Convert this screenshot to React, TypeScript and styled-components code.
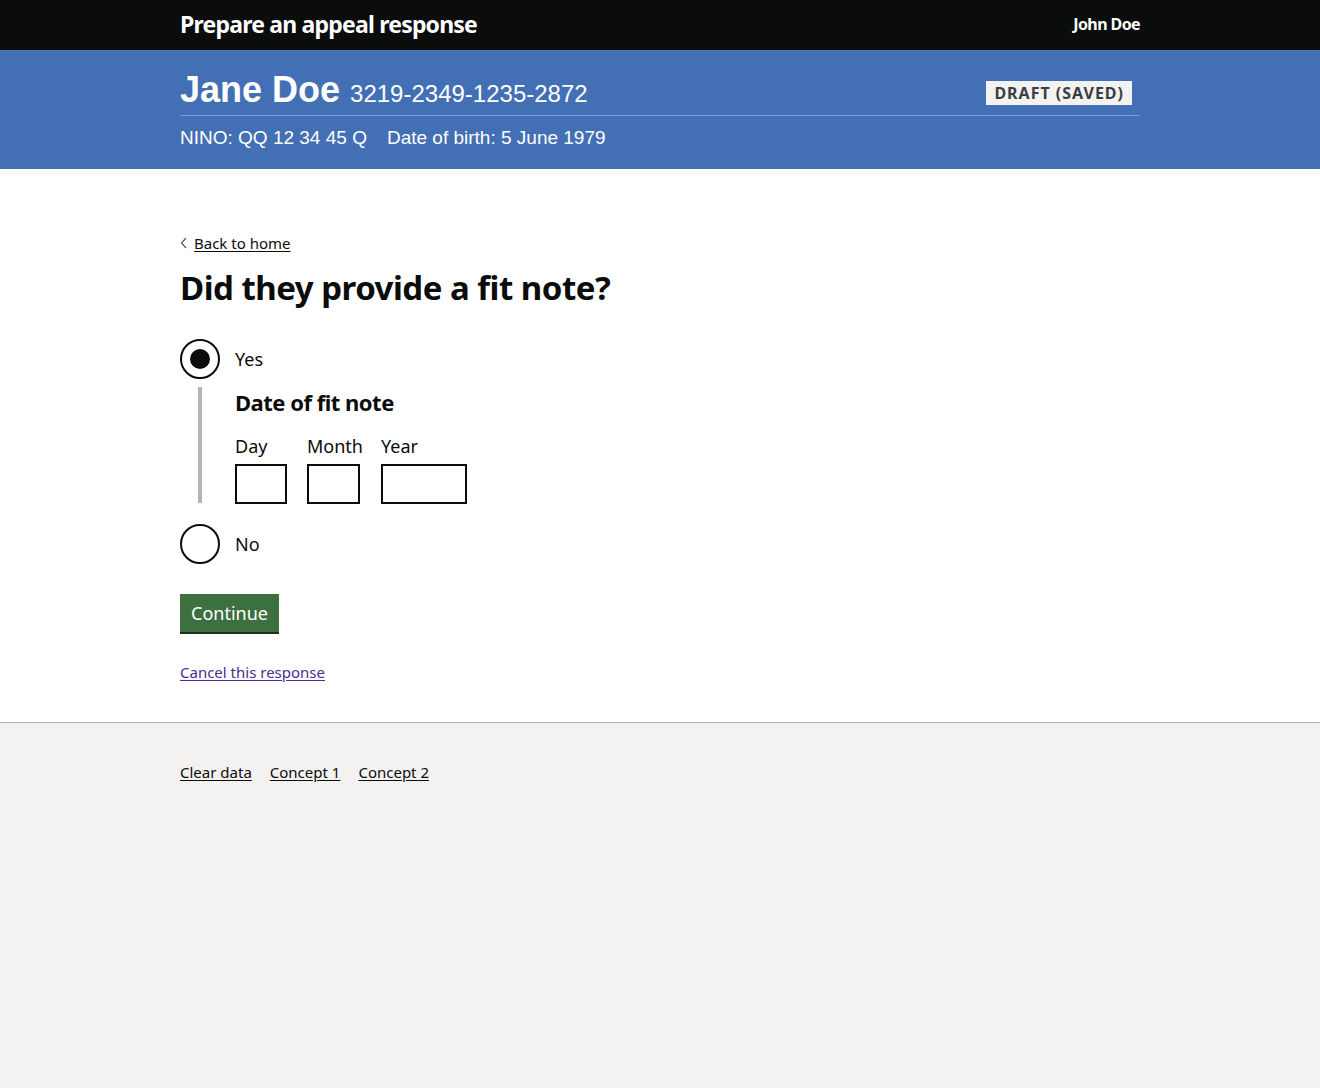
import styled, { createGlobalStyle } from "styled-components";

const GlobalStyle = createGlobalStyle`
  html, body {
    margin: 0;
    padding: 0;
    background: #f3f2f1;
  }
  body {
    font-family: "Noto Sans", Arial, sans-serif;
    color: #0b0c0c;
    -webkit-font-smoothing: antialiased;
  }
`;

const Width = styled.div`
  width: 960px;
  margin: 0 auto;
`;

const TopBar = styled.header`
  background: #0b0c0c;
  color: #fff;
  height: 50px;
`;

const TopInner = styled(Width)`
  display: flex;
  align-items: center;
  justify-content: space-between;
  height: 50px;
`;

const ServiceName = styled.div`
  font-weight: 700;
  font-size: 23px;
  letter-spacing: -0.8px;
  margin-top: -2px;
`;

const UserName = styled.div`
  font-weight: 700;
  font-size: 16px;
  letter-spacing: -0.6px;
  margin-top: -2px;
`;

const Banner = styled.section`
  background: #436fb5;
  color: #fff;
  font-family: "Liberation Sans", Arial, sans-serif;
  padding-top: 22px;
  height: 97px;
`;

const BannerTop = styled.div`
  display: flex;
  align-items: flex-end;
  justify-content: space-between;
  padding-bottom: 7px;
  border-bottom: 1px solid #7fa0e4;
`;

const Person = styled.div`
  display: flex;
  align-items: baseline;
  gap: 10px;
`;

const Name = styled.span`
  font-size: 36px;
  font-weight: 700;
  line-height: 1;
`;

const Reference = styled.span`
  font-size: 24px;
  line-height: 1;
`;

const Tag = styled.span`
  background: #f3f2f1;
  color: #383f43;
  font-family: "Noto Sans", Arial, sans-serif;
  font-weight: 700;
  font-size: 16px;
  letter-spacing: 1px;
  line-height: 24px;
  padding: 0 8px;
  margin-right: 8px;
  margin-bottom: 3px;
`;

const Details = styled.div`
  display: flex;
  gap: 20px;
  font-size: 19px;
  margin-top: 11px;
`;

const Main = styled.main`
  background: #fff;
  padding: 63px 0 40px;
`;

const BackLink = styled.a`
  display: inline-flex;
  align-items: center;
  gap: 6px;
  font-size: 15px;
  color: #0b0c0c;
  text-decoration: underline;
  text-underline-offset: 2px;
`;

const Heading = styled.h1`
  font-size: 33px;
  font-weight: 700;
  letter-spacing: -0.5px;
  margin: 14px 0 31px;
  line-height: 1.2;
`;

const RadioRow = styled.label`
  display: flex;
  align-items: center;
  gap: 15px;
  font-size: 18px;
`;

const RadioCircle = styled.span<{ $checked?: boolean }>`
  width: 36px;
  height: 36px;
  border: 2px solid #0b0c0c;
  border-radius: 50%;
  display: flex;
  align-items: center;
  justify-content: center;
  &::after {
    content: "";
    display: ${(p) => (p.$checked ? "block" : "none")};
    width: 20px;
    height: 20px;
    border-radius: 50%;
    background: #0b0c0c;
  }
`;

const Conditional = styled.div`
  margin: 12px 0 21px 18px;
  border-left: 4px solid #b1b4b6;
  padding-left: 33px;
  height: 116px;
`;

const Legend = styled.div`
  font-size: 22px;
  font-weight: 700;
  letter-spacing: -0.5px;
  margin-top: -4px;
`;

const DateFields = styled.div`
  display: flex;
  gap: 20px;
  margin-top: 17px;
`;

const DateField = styled.div<{ $w: number }>`
  display: flex;
  flex-direction: column;
  gap: 6px;
  width: ${(p) => p.$w}px;
  white-space: nowrap;
  font-size: 18px;
`;

const DateInput = styled.input<{ $w: number }>`
  box-sizing: border-box;
  width: ${(p) => p.$w}px;
  height: 40px;
  border: 2px solid #0b0c0c;
  border-radius: 0;
  margin: 0;
  padding: 5px;
`;

const Button = styled.button`
  margin-top: 30px;
  background: #3c703f;
  color: #fff;
  border: 0;
  box-shadow: 0 2px 0 #1c311d;
  font-family: "Noto Sans", Arial, sans-serif;
  font-size: 18px;
  padding: 0 11px;
  height: 38px;
  cursor: pointer;
`;

const CancelLink = styled.a`
  display: block;
  margin-top: 30px;
  font-size: 15px;
  color: #4c2c92;
  text-decoration: underline;
  text-underline-offset: 2px;
`;

const Footer = styled.footer`
  border-top: 1px solid #b1b4b6;
  background: #f3f2f1;
  padding: 39px 0 300px;
`;

const FooterLinks = styled.div`
  display: flex;
  gap: 18px;
`;

const FooterLink = styled.a`
  font-size: 15px;
  color: #0b0c0c;
  text-decoration: underline;
  text-underline-offset: 2px;
`;

export default function App() {
  return (
    <>
      <GlobalStyle />
      <TopBar>
        <TopInner>
          <ServiceName>Prepare an appeal response</ServiceName>
          <UserName>John Doe</UserName>
        </TopInner>
      </TopBar>
      <Banner>
        <Width>
          <BannerTop>
            <Person>
              <Name>Jane Doe</Name>
              <Reference>3219-2349-1235-2872</Reference>
            </Person>
            <Tag>DRAFT (SAVED)</Tag>
          </BannerTop>
          <Details>
            <span>NINO: QQ 12 34 45 Q</span>
            <span>Date of birth: 5 June 1979</span>
          </Details>
        </Width>
      </Banner>
      <Main>
        <Width>
          <BackLink href="#">
            <svg width="8" height="12" viewBox="0 0 8 12">
              <path d="M6 1 L1.5 6 L6 11" fill="none" stroke="#505a5f" strokeWidth="1.2" />
            </svg>
            Back to home
          </BackLink>
          <Heading>Did they provide a fit note?</Heading>
          <RadioRow>
            <RadioCircle $checked />
            Yes
          </RadioRow>
          <Conditional>
            <Legend>Date of fit note</Legend>
            <DateFields>
              <DateField $w={52}>
                Day
                <DateInput $w={52} />
              </DateField>
              <DateField $w={54}>
                Month
                <DateInput $w={53} />
              </DateField>
              <DateField $w={86}>
                Year
                <DateInput $w={86} />
              </DateField>
            </DateFields>
          </Conditional>
          <RadioRow>
            <RadioCircle />
            No
          </RadioRow>
          <Button>Continue</Button>
          <CancelLink href="#">Cancel this response</CancelLink>
        </Width>
      </Main>
      <Footer>
        <Width>
          <FooterLinks>
            <FooterLink href="#">Clear data</FooterLink>
            <FooterLink href="#">Concept 1</FooterLink>
            <FooterLink href="#">Concept 2</FooterLink>
          </FooterLinks>
        </Width>
      </Footer>
    </>
  );
}
